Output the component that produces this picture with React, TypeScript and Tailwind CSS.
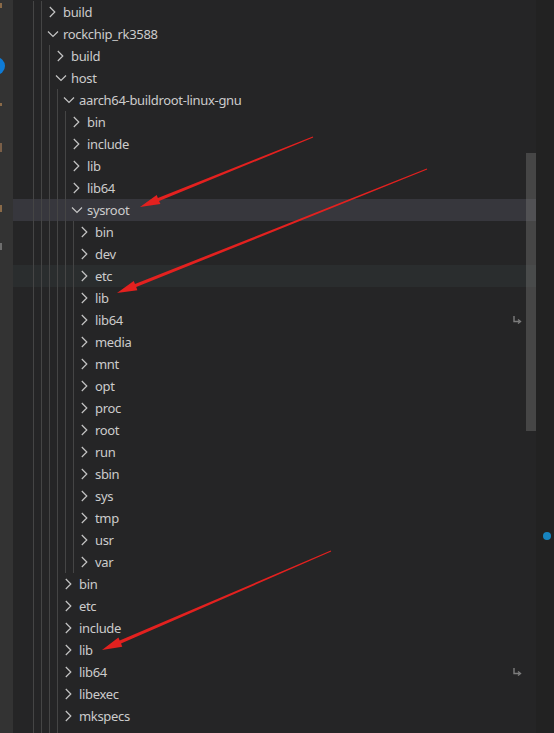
import React from "react";

type Node = { name: string; depth: number; open?: boolean; state?: "selected" | "hover"; link?: boolean; blank?: boolean };

const rows: Node[] = [
  { name: "build", depth: 0, open: false },
  { name: "rockchip_rk3588", depth: 0, open: true },
  { name: "build", depth: 1, open: false },
  { name: "host", depth: 1, open: true },
  { name: "aarch64-buildroot-linux-gnu", depth: 2, open: true },
  { name: "bin", depth: 3 },
  { name: "include", depth: 3 },
  { name: "lib", depth: 3 },
  { name: "lib64", depth: 3 },
  { name: "sysroot", depth: 3, open: true, state: "selected" },
  { name: "bin", depth: 4 },
  { name: "dev", depth: 4 },
  { name: "etc", depth: 4, state: "hover" },
  { name: "lib", depth: 4 },
  { name: "lib64", depth: 4, link: true },
  { name: "media", depth: 4 },
  { name: "mnt", depth: 4 },
  { name: "opt", depth: 4 },
  { name: "proc", depth: 4 },
  { name: "root", depth: 4 },
  { name: "run", depth: 4 },
  { name: "sbin", depth: 4 },
  { name: "sys", depth: 4 },
  { name: "tmp", depth: 4 },
  { name: "usr", depth: 4 },
  { name: "var", depth: 4 },
  { name: "bin", depth: 2 },
  { name: "etc", depth: 2 },
  { name: "include", depth: 2 },
  { name: "lib", depth: 2 },
  { name: "lib64", depth: 2, link: true },
  { name: "libexec", depth: 2 },
  { name: "mkspecs", depth: 2 },
  { name: "", depth: 2, blank: true },
];

// red annotation arrows: [startX, startY, tipX, tipY]
const arrows = [
  [313, 137, 140, 207],
  [427, 169, 117, 293],
  [331, 551, 102, 650],
];

const arrowPoints = (sx: number, sy: number, tx: number, ty: number) => {
  const dx = tx - sx;
  const dy = ty - sy;
  const len = Math.hypot(dx, dy);
  const ux = dx / len;
  const uy = dy / len;
  const nx = -uy;
  const ny = ux;
  const bx = tx - ux * 20;
  const by = ty - uy * 20;
  const p = (x: number, y: number) => `${x.toFixed(1)},${y.toFixed(1)}`;
  return [
    p(sx + nx * 0.5, sy + ny * 0.5),
    p(bx + nx * 1.6, by + ny * 1.6),
    p(bx + nx * 5, by + ny * 5),
    p(tx, ty),
    p(bx - nx * 5, by - ny * 5),
    p(bx - nx * 1.6, by - ny * 1.6),
    p(sx - nx * 0.5, sy - ny * 0.5),
  ].join(" ");
};

const Chevron = ({ open }: { open?: boolean }) => (
  <svg width="14" height="22" className="shrink-0 overflow-visible">
    {open ? (
      <polyline points="-1,8.5 4,13.5 9,8.5" fill="none" stroke="#c5c5c5" strokeWidth="1.2" />
    ) : (
      <polyline points="0.8,6 5.8,11 0.8,16" fill="none" stroke="#c5c5c5" strokeWidth="1.2" />
    )}
  </svg>
);

const LinkIcon = () => (
  <svg width="10" height="10" viewBox="0 0 10 10" className="ml-auto mr-[14px] shrink-0">
    <path d="M2 1 V6.5 H7.5" fill="none" stroke="#7d7d7d" strokeWidth="1.4" />
    <path d="M6 4.5 L8.5 6.5 L6 8.5" fill="none" stroke="#7d7d7d" strokeWidth="1.4" />
  </svg>
);

const Row = ({ node }: { node: Node }) => {
  const guides = Array.from({ length: node.depth + 2 });
  const bg =
    node.state === "selected" ? "bg-[#37373d]" : node.state === "hover" ? "bg-[#2a2d2e]" : "";
  return (
    <div className={`flex h-[22px] items-stretch pl-[20px] ${bg}`}>
      {guides.map((_, i) => (
        <div key={i} className="w-2 shrink-0 border-l border-[#454545]" />
      ))}
      {!node.blank && <Chevron open={node.open} />}
      <span className="whitespace-nowrap text-[13px] leading-[22px] tracking-[-0.33px] text-[#cccccc]">
        {node.name}
      </span>
      {node.link && (
        <div className="ml-auto flex items-center">
          <LinkIcon />
        </div>
      )}
    </div>
  );
};

export default function App() {
  return (
    <div
      className="relative flex h-[733px] w-[554px] overflow-hidden bg-[#252526]"
      style={{ fontFamily: '"Segoe UI", "Noto Sans", sans-serif' }}
    >
      <div className="relative w-[13px] shrink-0 overflow-hidden bg-[#333333]">
        <svg width="13" height="733" className="block">
          <rect x="0" y="3" width="2" height="5" fill="#8a6a48" />
          <rect x="0" y="103" width="2" height="3" fill="#8a6a48" />
          <rect x="0" y="143" width="2" height="9" fill="#7a5f48" />
          <rect x="0" y="205" width="2" height="7" fill="#8a6a48" />
          <rect x="0" y="243" width="2" height="7" fill="#6e6e6e" />
          <circle cx="-4" cy="66" r="9" fill="#0e7bd6" />
        </svg>
      </div>

      <div className="relative flex-1 overflow-hidden pt-px">
        {rows.map((node, i) => (
          <Row key={i} node={node} />
        ))}
        <div className="absolute left-[513px] top-[153px] h-[278px] w-[10px] bg-[#79797966]" />
      </div>

      <div className="relative w-[18px] shrink-0 bg-[#222222]">
        <div className="absolute left-[7px] top-[532px] h-[8px] w-[8px] rounded-full bg-[#1784c0]" />
      </div>

      <svg width="554" height="733" className="pointer-events-none absolute left-0 top-0">
        {arrows.map(([sx, sy, tx, ty], i) => (
          <polygon key={i} points={arrowPoints(sx, sy, tx, ty)} fill="#e3211f" />
        ))}
      </svg>
    </div>
  );
}
